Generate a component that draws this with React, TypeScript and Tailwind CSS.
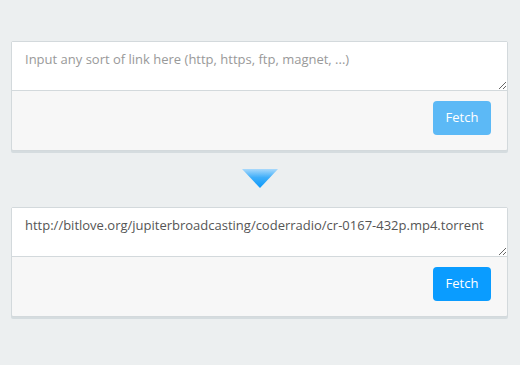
import React from "react";

function Card({ value, placeholder, active }: { value?: string; placeholder?: string; active?: boolean }) {
  return (
    <div className="w-[497px] border border-[#d3d9dc] bg-[#f7f7f7] shadow-[0_2px_0_#d5dcdf] rounded-[2px]">
      <textarea
        className="block w-full h-[49px] bg-white border-b border-[#d3d9dc] px-[13px] pt-[8px] text-[13px] text-[#555] placeholder:text-[#999] outline-none resize-y"
        style={{ fontFamily: '"Open Sans", sans-serif' }}
        placeholder={placeholder}
        defaultValue={value}
      />
      <div className="flex justify-end pt-[10px] pb-[15px] pr-[16px]">
        <button
          className={`h-[34px] w-[58px] rounded-[4px] text-white text-[13px] ${active ? "bg-[#0a9cff]" : "bg-[#5cb9f6]"}`}
          style={{ fontFamily: '"Open Sans", sans-serif' }}
        >
          Fetch
        </button>
      </div>
    </div>
  );
}

export default function App() {
  return (
    <div className="w-[520px] h-[365px] bg-[#eceff0] pt-[41px] pl-[11px]">
      <Card placeholder="Input any sort of link here (http, https, ftp, magnet, ...)" />
      <div className="flex justify-center w-[497px] pt-[18px] pb-[19px]">
        <svg width="36" height="19" viewBox="0 0 36 19">
          <defs>
            <linearGradient id="g" x1="0" y1="0" x2="0" y2="1">
              <stop offset="0" stopColor="#a9d9fb" />
              <stop offset="0.45" stopColor="#3eaefa" />
              <stop offset="1" stopColor="#0a99fb" />
            </linearGradient>
          </defs>
          <polygon points="0,0 36,0 18,19" fill="url(#g)" />
        </svg>
      </div>
      <Card value="http://bitlove.org/jupiterbroadcasting/coderradio/cr-0167-432p.mp4.torrent" active />
    </div>
  );
}
